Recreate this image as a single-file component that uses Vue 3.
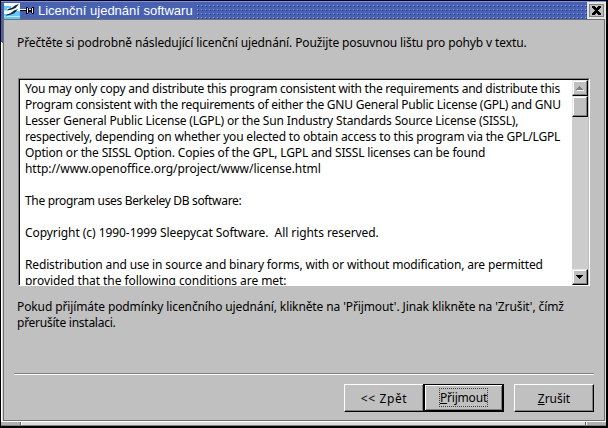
<script setup>
const license = [
  ['You may only copy and distribute this program consistent with the requirements and distribute this', 'a'],
  ['Program consistent with the requirements of either the GNU General Public License (GPL) and GNU', 'b'],
  ['Lesser General Public License (LGPL) or the Sun Industry Standards Source License (SISSL),', 'c'],
  ['respectively, depending on whether you elected to obtain access to this program via the GPL/LGPL', 'd'],
  ['Option or the SISSL Option. Copies of the GPL, LGPL and SISSL licenses can be found', 'e'],
  ['http://www.openoffice.org/project/www/license.html', 'f'],
  ['', 'blank'],
  ['The program uses Berkeley DB software:', 'g'],
  ['', 'blank'],
  ['Copyright (c) 1990-1999 Sleepycat Software.\u00a0 All rights reserved.', 'h'],
  ['', 'blank'],
  ['Redistribution and use in source and binary forms, with or without modification, are permitted', 'i'],
  ['provided that the following conditions are met:', 'j'],
]
</script>

<template>
  <div class="window">
    <header class="titlebar">
      <svg class="app" width="16" height="16" viewBox="0 0 16 16">
        <rect width="16" height="16" fill="#f4fbff" />
        <path d="M0 3h7v2H3v2H0zM0 11h16v5H0zM9 8h7v3H7V9h2z" fill="#62c8f5" />
        <path d="M0 7h3v1H0zM0 13h16v1H0z" fill="#b8e8fc" />
        <path d="M15 .8 11.500 5 8 6.500 3 7.500 4 6 8.500 4.500 11 2.500zM14 6 10.500 10 7 11.500 3 12.500 1.500 14 3 11.500 7 10 10 7.500z" fill="#10202c" />
      </svg>
      <svg class="pin" width="14" height="9" viewBox="0 0 14 9" shape-rendering="crispEdges">
        <path d="M0 3h6v1H0z" fill="#fff" />
        <path d="M0 4h6v1H0zM6 1h2v1h1v1h2V2h1V1h2v7h-2V7h-1V6H9v1H8v1H6z" fill="#000" />
        <path d="M7 2h1v5H7zM9 3h2v1H9zM12 2h1v5h-1z" fill="#e8e8f0" />
      </svg>
      <h1>Licenční ujednání softwaru</h1>
      <div class="grip"></div>
      <button class="close" aria-label="Zavřít">
        <svg width="9" height="9" viewBox="0 0 9 9" shape-rendering="crispEdges">
          <path d="M0 0h3v1h1v1h1V1h1V0h3v2H8v1H7v1H6v1h1v1h1v1h1v2H6V8H5V7H4v1H3v1H0V7h1V6h1V5h1V4H2V3H1V2H0z" />
        </svg>
      </button>
    </header>
    <div class="middle">
      <main class="content">
        <p class="intro">Přečtěte si podrobně následující licenční ujednání. Použijte posuvnou lištu pro pohyb v textu.</p>
        <div class="field">
          <div class="text"><div v-for="(l, i) in license" :key="i" class="line" :class="l[1]">{{ l[0] }}</div></div>
          <div class="scroll">
            <div class="sb up"><svg width="8" height="5" viewBox="0 0 8 5" shape-rendering="crispEdges"><path d="M3 0h1v1h1v1h1v1h1v1H0V3h1V2h1V1h1z" fill="#808080" /><path d="M1 4h7v1H1z" fill="#fff" /></svg></div>
            <div class="thumb"></div>
            <div class="track"></div>
            <div class="sb"><svg width="8" height="5" viewBox="0 0 8 5" shape-rendering="crispEdges"><path d="M0 0h7v1H6v1H5v1H4v1H3V3H2V2H1V1H0z" /></svg></div>
          </div>
        </div>
        <div class="note">
          <div class="line n1">Pokud přijímáte podmínky licenčního ujednání, klikněte na 'Přijmout'. Jinak klikněte na 'Zrušit', čímž</div>
          <div class="line n2">přerušíte instalaci.</div>
        </div>
        <div class="rule"></div>
        <footer>
          <button class="btn back">&lt;&lt; Zpět</button>
          <button class="btn default"><span><u>P</u>řijmout</span></button>
          <button class="btn last"><span><u>Z</u>rušit</span></button>
        </footer>
      </main>
    </div>
    <div class="bottom"><i></i><b></b><i></i></div>
  </div>
</template>

<style>
body { overflow: hidden; }
</style>
<style scoped>
* { box-sizing: border-box; }
.window { width: 608px; height: 428px; background: #000; padding: 1px 2px 2px 1px; display: flex; flex-direction: column; font-family: "Noto Sans", sans-serif; font-size: 12px; color: #000; }
.titlebar { height: 18px; background: #4861b0; border-top: 1px solid #7a92e8; display: flex; padding-left: 3px; }
.app { margin-top: 1px; flex: none; }
.pin { margin: 4px 0 0 0; flex: none; }
h1 { font: 13px/17px "Liberation Sans", sans-serif; color: #fff; margin: 0 0 0 4px; width: 159px; white-space: nowrap; }
.grip { flex: 1; margin-top: 1px; background: conic-gradient(from 0deg at 1px 1px, #0000 75%, #8aa4f8 0) 0 2px / 4px 4px, conic-gradient(from 0deg at 1px 1px, #0000 75%, #26387c 0) 1px 3px / 4px 4px; }
.close { width: 19px; height: 17px; padding: 0 1px 0 0; border: 2px solid #e4e4e4; background: #c0c0c0; box-shadow: inset 1px 1px #808080, inset -1px -1px #808080; display: grid; place-items: center; flex: none; }
.middle { flex: 1; display: flex; padding: 0 1px; background: linear-gradient(#4861b0 24px, #dcd8d8 24px) 0 0 / 2px 100% no-repeat, #dcd8d8; border-left: 1px solid #fff; border-image: linear-gradient(#4861b0 24px, #fff 24px) 1; border-image-width: 0 0 0 1px; }
.content { width: 100%; border: 1px solid #707070; background: #c0c0c0; padding: 0 10px; display: flex; flex-direction: column; }
.line, .intro { height: 16px; line-height: 16px; white-space: pre; }
.intro { margin: 15px 0 0 3px; letter-spacing: -.12px; }
.a { letter-spacing: -.24px; }
.b { letter-spacing: -.23px; }
.c { letter-spacing: -.15px; }
.d { letter-spacing: -.185px; }
.e { letter-spacing: -.165px; }
.f { letter-spacing: -.05px; }
.g { letter-spacing: -.33px; }
.h { letter-spacing: -.06px; }
.i { letter-spacing: -.15px; }
.j { letter-spacing: -.06px; }
.n1 { letter-spacing: -.11px; }
.n2 { letter-spacing: -.25px; }
.field { margin: 27px 4px 0 4px; height: 208px; border: 1px solid #808080; border-right-color: #fff; border-bottom-color: #fff; display: flex; }
.text { flex: 1; min-width: 0; background: #fff; border: 1px solid #000; border-width: 1px 0 0 1px; padding: 1px 0 0 5px; overflow: hidden; }
.scroll { width: 17px; flex: none; border-top: 1px solid #000; border-right: 1px solid #c0c0c0; display: flex; flex-direction: column; background: #ccc; }
.sb, .thumb { background: #c0c0c0; border: 1px solid #e8e8e8; border-right-color: #000; border-bottom-color: #000; box-shadow: inset -1px -1px #808080, inset 1px 1px #fff; }
.sb { height: 16px; display: grid; place-items: center; flex: none; }
.thumb { height: 21px; flex: none; }
.track { flex: 1; }
.note { height: 32px; margin: 13px 0 0 3px; }
.rule { height: 2px; border-top: 1px solid #808080; border-bottom: 1px solid #fff; margin-top: 42px; }
footer { display: flex; justify-content: flex-end; padding-top: 9px; }
.btn { font: inherit; width: 80px; height: 28px; padding: 0; background: #c0c0c0; border: 1px solid #fff; border-right-color: #000; border-bottom-color: #000; box-shadow: inset -1px -1px #808080; display: grid; place-items: center; }
.back { letter-spacing: .6px; }
.default { width: 81px; margin-left: -1px; border: 1px solid #000; border-width: 1px 2px 2px 2px; box-shadow: inset 1px 1px #fff, inset -1px -1px #808080; letter-spacing: -.2px; }
.default span { outline: 1px dotted #404040; }
.last { margin-left: 10px; }
u { text-decoration-thickness: 1px; text-underline-offset: 1px; }
.bottom { height: 5px; display: flex; background: #dcdcdc; border-bottom: 1px solid #808080; border-top: 1px solid #fff; }
.bottom i { width: 20px; background: #b0b0b0; border-right: 1px solid #606060; }
.bottom i:last-child { border: 0; border-left: 1px solid #fff; }
.bottom b { flex: 1; border-right: 1px solid #606060; border-left: 1px solid #fff; }
</style>
